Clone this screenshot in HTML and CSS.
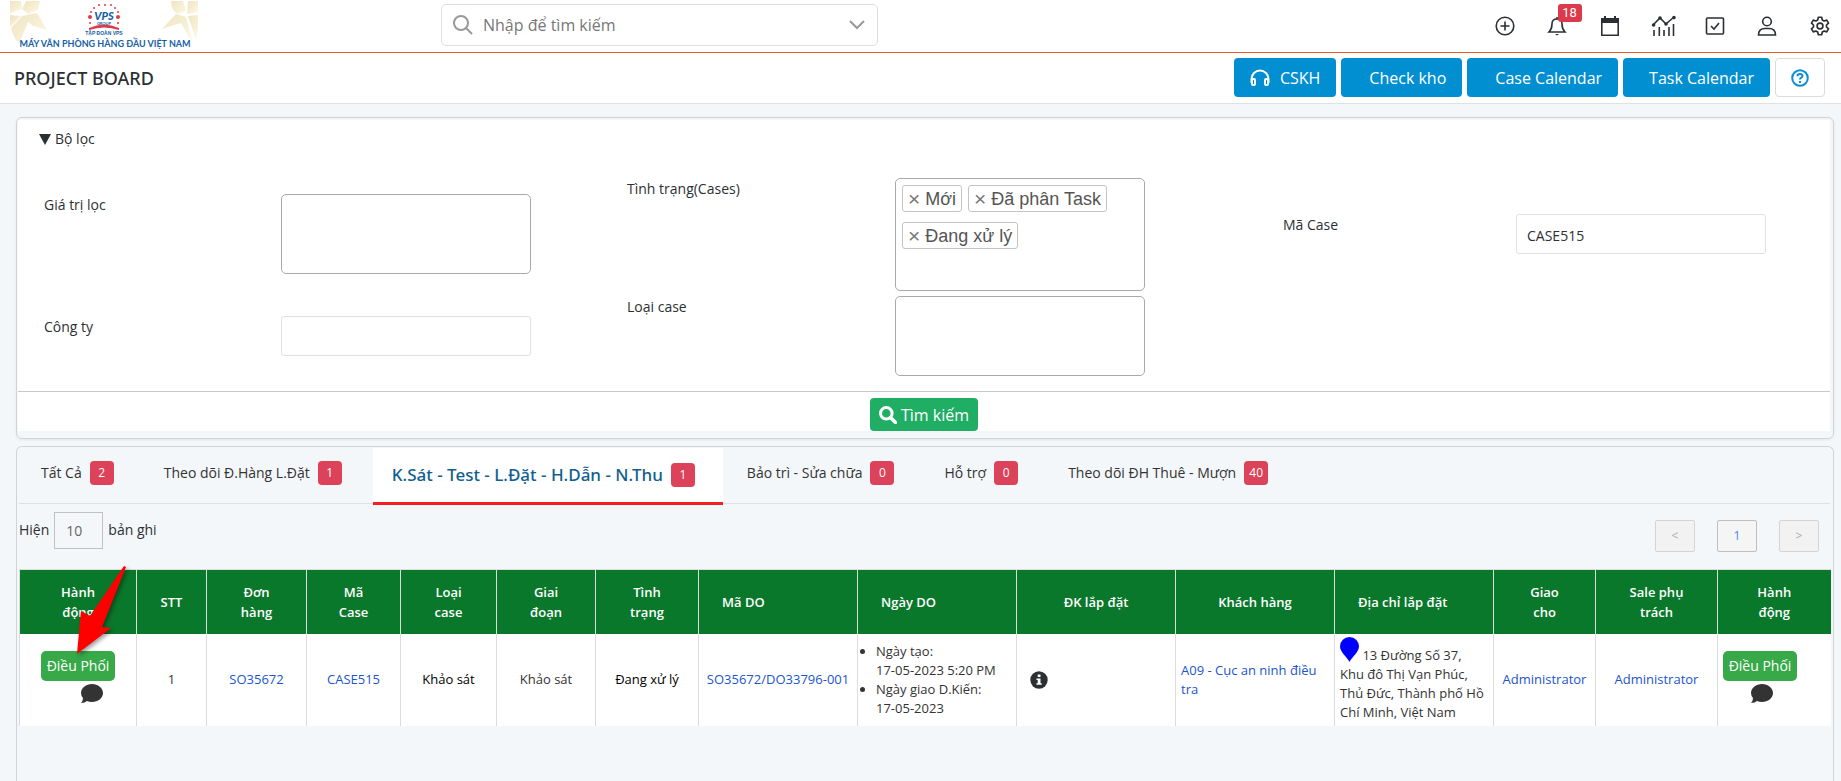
FILE: index.html
```html
<!DOCTYPE html>
<html lang="vi">
<head>
<meta charset="utf-8">
<meta name="viewport" content="width=device-width, initial-scale=1">
<title>Project Board</title>
<link rel="stylesheet" href="styles.css">
</head>
<body>
<header class="topbar">
  <a class="logo" href="#" aria-label="VPS Group">
    <svg width="188" height="50" viewBox="0 0 188 50">
      <defs>
        <linearGradient id="gold" x1="0" y1="0" x2="1" y2="1"><stop offset="0" stop-color="#efe3c2"/><stop offset="1" stop-color="#fdf9e4"/></linearGradient>
      </defs>
      <g fill="url(#gold)">
        <path d="M0 0H11L12 8L0 12Z"/><path d="M16 0H30L28 9L18 13L12 8Z"/><path d="M0 14L11 15L0 26Z"/><path d="M12 15L27 12L37 29L23 25L18 21L9 43Q3 36 1 27Z"/>
        <path d="M161 0H173L176 10L168 13Q161 10 161 0Z"/><path d="M178 0H188V11L177 13Z"/><path d="M178 15L188 14V29L186 38Z"/><path d="M176 16L183 43L171 22L152 28L166 13Z"/>
      </g>
      <g fill="#e2384a">
        <circle cx="80" cy="16" r="2"/><circle cx="81" cy="11" r="1"/><circle cx="84" cy="7" r="1"/><circle cx="89" cy="4" r="1"/><circle cx="95" cy="4" r="1"/><circle cx="101" cy="4" r="1"/><circle cx="105" cy="7" r="1"/><circle cx="108" cy="11" r="1"/><circle cx="108" cy="16" r="2"/><circle cx="80" cy="22" r="1"/><circle cx="108" cy="22" r="1"/>
        <path d="M79 27Q94 20 109 27V29Q94 24 79 29Z"/>
      </g>
      <g fill="#1660a8" text-anchor="middle" class="logo-text">
        <text x="94" y="19" class="logo-name">VPS</text>
        <text x="94" y="24" class="logo-group">GROUP</text>
        <text x="94" y="34" class="logo-corp">TẬP ĐOÀN VPS</text>
        <text x="95" y="46" class="logo-slogan">MÁY VĂN PHÒNG HÀNG ĐẦU VIỆT NAM</text>
      </g>
    </svg>
  </a>
  <label class="search">
    <svg width="20" height="20" viewBox="0 0 20 20" fill="none" stroke="#999" stroke-width="2"><circle cx="8" cy="8" r="7"/><path d="M13 13L19 19"/></svg>
    <input type="text" placeholder="Nhập để tìm kiếm" aria-label="Nhập để tìm kiếm">
    <svg width="16" height="10" viewBox="0 0 16 10" fill="none" stroke="#999" stroke-width="2"><path d="M1 1L8 8L15 1"/></svg>
  </label>
  <nav class="tools">
    <button aria-label="Thêm"><svg viewBox="0 0 20 20" class="line"><circle cx="10" cy="10" r="8.8"/><path d="M10 5.5V14.5M5.5 10H14.5"/></svg></button>
    <button aria-label="Thông báo"><svg viewBox="0 0 20 20" class="line"><path d="M2 16H18Q15 13 15 8Q15 3 10 3Q5 3 5 8Q5 13 2 16Z"/><path d="M10 1V3"/><path d="M8 18H12L10 19.6Z" fill="#2c3034" stroke="none"/></svg><span class="count">18</span></button>
    <button aria-label="Lịch"><svg viewBox="0 0 20 20"><path fill="#2c3034" fill-rule="evenodd" d="M4 0H6V2H14V0H16V2H19V20H1V2H4ZM2.6 7V18.4H17.4V7Z"/></svg></button>
    <button aria-label="Báo cáo"><svg viewBox="0 0 24 20" class="line wide"><path d="M1 9L8 2L14 8L22 1"/><path d="M2 14V20M7.300 11V20M12 14V20M17 11V20M21.500 8V20"/><g fill="#2c3034"><circle cx="1.600" cy="9" r="1"/><circle cx="8" cy="2" r="1"/><circle cx="14" cy="8" r="1"/><circle cx="22" cy="1.600" r="1"/></g></svg></button>
    <button aria-label="Công việc"><svg viewBox="0 0 20 20" class="line"><rect x="1.500" y="2" width="17" height="16" rx="1"/><path d="M6 10L9 13L14 7"/></svg></button>
    <button aria-label="Tài khoản"><svg viewBox="0 0 20 20" class="line"><circle cx="10" cy="5.500" r="4.300"/><path d="M1.500 19Q1.500 12.500 8 12.500H12Q18.500 12.500 18.500 19Z"/></svg></button>
    <button aria-label="Cài đặt"><svg viewBox="0 0 24 24" class="line gear"><circle cx="12" cy="12" r="3.500"/><path d="M10 1.500H14L14.700 4.700L17 6L20.100 5L22.200 8.600L19.800 10.800V13.200L22.200 15.400L20.100 19L17 18L14.700 19.300L14 22.500H10L9.300 19.300L7 18L3.900 19L1.800 15.400L4.200 13.200V10.800L1.800 8.600L3.900 5L7 6L9.300 4.700Z" stroke-linejoin="round"/></svg></button>
  </nav>
</header>

<section class="pagehead">
  <h1>PROJECT BOARD</h1>
  <div class="actions">
    <button class="btn with-icon"><svg width="20" height="18" viewBox="0 0 20 18" fill="none" stroke="#fff" stroke-width="2"><path d="M1.500 14V10A8.500 8.500 0 0 1 18.500 10V14"/><rect x="2" y="10" width="3" height="6" rx="1"/><rect x="15" y="10" width="3" height="6" rx="1"/></svg>CSKH</button>
    <button class="btn roomy">Check kho</button>
    <button class="btn roomy">Case Calendar</button>
    <button class="btn">Task Calendar</button>
    <button class="btn-help" aria-label="Trợ giúp"><svg width="18" height="18" viewBox="0 0 18 18" fill="none" stroke="#0a8fd2" stroke-width="2"><circle cx="9" cy="9" r="7.800"/><path d="M6.500 7.200Q6.500 5 9 5Q11.500 5 11.500 7Q11.500 8.200 10 8.900Q9 9.400 9 10.600"/><path d="M9 12V14"/></svg></button>
  </div>
</section>

<main>
  <section class="panel filter">
    <details class="filter-body" open>
      <summary><svg width="12" height="11" viewBox="0 0 12 11"><path d="M0 0H12L6 11Z" fill="#2c3034"/></svg>Bộ lọc</summary>
      <div class="fields">
        <div class="group group-a">
          <div class="field"><label for="f1">Giá trị lọc</label><input id="f1" class="multi" type="text"></div>
          <div class="field"><label for="f2">Công ty</label><input id="f2" class="single" type="text"></div>
        </div>
        <div class="group group-b">
          <div class="field"><label for="f3">Tình trạng(Cases)</label>
            <div class="multi chips">
              <span class="chip"><button aria-label="Bỏ Mới">×</button>Mới</span>
              <span class="chip"><button aria-label="Bỏ Đã phân Task">×</button>Đã phân Task</span>
              <span class="chip"><button aria-label="Bỏ Đang xử lý">×</button>Đang xử lý</span>
              <input id="f3" type="text">
            </div>
          </div>
          <div class="field"><label for="f4">Loại case</label><input id="f4" class="multi" type="text"></div>
        </div>
        <div class="group group-c">
          <div class="field"><label for="f5">Mã Case</label><input id="f5" class="single" type="text" value="CASE515"></div>
        </div>
      </div>
    </details>
    <div class="submit"><button class="btn-search"><svg width="18" height="18" viewBox="0 0 18 18" fill="none" stroke="#fff"><circle cx="7.300" cy="7.300" r="5.800" stroke-width="3"/><path d="M11.500 11.500L16.500 16.500" stroke-width="3.500" stroke-linecap="round"/></svg>Tìm kiếm</button></div>
  </section>

  <section class="panel results">
    <nav class="tabs">
      <a href="#" class="tab">Tất Cả<span class="badge">2</span></a>
      <a href="#" class="tab">Theo dõi Đ.Hàng L.Đặt<span class="badge">1</span></a>
      <a href="#" class="tab active">K.Sát - Test - L.Đặt - H.Dẫn - N.Thu<span class="badge">1</span></a>
      <a href="#" class="tab">Bảo trì - Sửa chữa<span class="badge">0</span></a>
      <a href="#" class="tab">Hỗ trợ<span class="badge">0</span></a>
      <a href="#" class="tab">Theo dõi ĐH Thuê - Mượn<span class="badge">40</span></a>
    </nav>
    <div class="listbar">
      <label class="length">Hiện <input type="text" value="10"> bản ghi</label>
      <div class="pager">
        <button disabled>&lt;</button>
        <button class="current">1</button>
        <button disabled>&gt;</button>
      </div>
    </div>
    <div class="tablewrap">
      <table>
        <colgroup>
          <col class="w117"><col class="w70"><col class="w100"><col class="w94"><col class="w96"><col class="w99"><col class="w103"><col class="w159"><col class="w159"><col class="w159"><col class="w159"><col class="w159"><col class="w102"><col class="w122"><col class="w113">
        </colgroup>
        <thead>
          <tr>
            <th>Hành<br>động</th><th>STT</th><th>Đơn<br>hàng</th><th>Mã<br>Case</th><th>Loại<br>case</th><th>Giai<br>đoạn</th><th>Tình<br>trạng</th><th class="start">Mã DO</th><th class="start">Ngày DO</th><th>ĐK lắp đặt</th><th>Khách hàng</th><th class="start">Địa chỉ lắp đặt</th><th>Giao<br>cho</th><th>Sale phụ<br>trách</th><th>Hành<br>động</th>
          </tr>
        </thead>
        <tbody>
          <tr>
            <td><div class="ops"><button class="btn-row">Điều Phối</button><svg class="bubble" viewBox="0 0 22 19"><path d="M11 0C17 0 22 4 22 9S17 18 11 18Q8 18 6 17Q4 19 0 19Q2 17 2 14Q0 12 0 9C0 4 5 0 11 0Z" fill="#333"/></svg></div></td>
            <td>1</td>
            <td><a href="#">SO35672</a></td>
            <td><a href="#">CASE515</a></td>
            <td class="dark">Khảo sát</td>
            <td>Khảo sát</td>
            <td class="dark">Đang xử lý</td>
            <td><a href="#">SO35672/DO33796-001</a></td>
            <td class="dates"><ul><li>Ngày tạo:<br>17-05-2023 5:20 PM</li><li>Ngày giao D.Kiến:<br>17-05-2023</li></ul></td>
            <td class="left info"><svg width="18" height="18" viewBox="0 0 18 18"><circle cx="9" cy="9" r="8.700" fill="#2c3034"/><path fill="#fff" d="M7.700 3.500H10.500V6H7.700ZM6.500 7.500H10.500V12.200H11.700V13.800H6.500V12.200H7.700V9.100H6.500Z"/></svg></td>
            <td class="left"><a href="#">A09 - Cục an ninh điều tra</a></td>
            <td class="left"><svg class="pin" width="19" height="25" viewBox="0 0 19 25"><path d="M9.500 0A9.500 9.500 0 0 1 19 9.500C19 15 12 20 9.500 25C7 20 0 15 0 9.500A9.500 9.500 0 0 1 9.500 0Z" fill="#00f"/></svg> 13 Đường Số 37, Khu đô Thị Vạn Phúc, Thủ Đức, Thành phố Hồ Chí Minh, Việt Nam</td>
            <td><a href="#">Administrator</a></td>
            <td><a href="#">Administrator</a></td>
            <td class="left"><div class="ops ops-end"><button class="btn-row">Điều Phối</button><svg class="bubble" viewBox="0 0 22 19"><path d="M11 0C17 0 22 4 22 9S17 18 11 18Q8 18 6 17Q4 19 0 19Q2 17 2 14Q0 12 0 9C0 4 5 0 11 0Z" fill="#333"/></svg></div></td>
          </tr>
        </tbody>
      </table>
      <svg class="pointer" width="60" height="100" viewBox="0 0 60 100"><path d="M52 7L54 8L30 68L39 69L5 95L9 52L18 57Z" fill="#f00"/></svg>
    </div>
  </section>
</main>
</body>
</html>
```
FILE: styles.css
```css
* { box-sizing: border-box; }

body {
  margin: 0;
  min-height: 100vh;
  display: flex;
  flex-direction: column;
  background: #f3f7fa;
  color: #2c3034;
  font: 14px/20px "Open Sans", "Noto Sans", sans-serif;
}

button, input { font: inherit; color: inherit; margin: 0; }
button { cursor: pointer; }
a { color: #1b55cc; text-decoration: none; }

/* Top bar */
.topbar {
  display: flex;
  align-items: center;
  height: 53px;
  background: #fff;
  border-bottom: 1px solid #f0582a;
}
.logo { display: block; width: 441px; height: 50px; padding-left: 10px; }
.logo svg { display: block; }
.logo-name { font: italic 900 11px Lato, sans-serif; }
.logo-group { font: 700 4px Lato, sans-serif; }
.logo-corp { font: 700 5px "Liberation Sans", sans-serif; }
.logo-slogan { font: 700 9px Lato, sans-serif; }
.search {
  display: flex;
  align-items: center;
  gap: 10px;
  width: 437px;
  height: 42px;
  margin-bottom: 2px;
  padding: 0 12px 0 11px;
  border: 1px solid #dcdfe1;
  border-radius: 5px;
}
.search input {
  flex: 1;
  min-width: 0;
  border: 0;
  padding: 0;
  outline: 0;
  background: none;
  font-size: 16px;
}
.search input::placeholder { color: #777; opacity: 1; }
.tools {
  display: flex;
  justify-content: space-between;
  width: 336px;
  margin-left: auto;
  margin-right: 11px;
}
.tools button {
  position: relative;
  display: grid;
  place-items: center;
  width: 21px;
  height: 20px;
  padding: 0;
  border: 0;
  background: none;
}
.tools svg { width: 20px; height: 20px; overflow: visible; }
.tools .wide { width: 24px; }
.line { fill: none; stroke: #2c3034; stroke-width: 1.6px; }
.gear { stroke-width: 2px; }
.count {
  position: absolute;
  left: 11px;
  top: -12px;
  width: 24px;
  border-radius: 3px;
  background: #dc3a4b;
  color: #fff;
  font: 13px/18px Roboto, sans-serif;
  text-align: center;
}

/* Page heading */
.pagehead {
  display: flex;
  align-items: center;
  justify-content: space-between;
  padding: 5px 16px 6px 14px;
  background: #fff;
  border-bottom: 1px solid #dfe2e4;
}
h1 { margin: 0; font: 500 18px/24px "Noto Sans", "Open Sans", sans-serif; }
.actions { display: flex; gap: 5px; }
.btn {
  height: 39px;
  padding: 0 16px 0 26px;
  border: 0;
  border-radius: 4px;
  background: #028fd2;
  color: #fff;
  font-size: 16px;
}
.roomy { padding-left: 28px; }
.with-icon { display: flex; align-items: center; gap: 10px; padding-left: 16px; }
.btn-help {
  display: grid;
  place-items: center;
  width: 50px;
  height: 39px;
  border: 1px solid #d9dcde;
  border-radius: 4px;
  background: #fff;
}

/* Panels */
main { flex: 1; display: flex; flex-direction: column; gap: 7px; padding: 13px 7px 0 16px; }
.panel { border: 1px solid #d0d4d7; border-radius: 6px; }
.filter { padding: 2px 3px 7px 1px; box-shadow: 0 1px 3px #0001; }
.filter-body { min-height: 272px; background: #fff; border-bottom: 1px solid #c6c8ca; }
summary {
  display: flex;
  align-items: center;
  gap: 4px;
  padding: 9px 21px 0;
  list-style: none;
}
.fields {
  display: grid;
  grid-template-columns: 583fr 656fr 483fr;
  padding: 29px 64px 15px 26px;
}
.group { display: flex; flex-direction: column; }
.group-a { padding: 16px 96px 0 0; gap: 42px; }
.group-b { padding-right: 138px; gap: 5px; }
.group-c { padding-top: 36px; }
.field { display: flex; justify-content: space-between; }
.field label { padding-top: 1px; }
.multi, .single { width: 250px; background: #fff; outline: 0; }
.multi { height: 80px; border: 1px solid #aaa; border-radius: 5px; }
.single { height: 40px; padding: 2px 10px 0; border: 1px solid #dfe1e2; border-radius: 3px; }
.chips {
  display: flex;
  flex-wrap: wrap;
  align-content: flex-start;
  gap: 10px 6px;
  height: 113px;
  padding: 6px;
}
.chips input { width: 12px; border: 0; padding: 0; outline: 0; }
.chip {
  display: flex;
  align-items: center;
  gap: 5px;
  height: 27px;
  padding: 0 5px;
  border: 1px solid #c4c4c4;
  border-radius: 3px;
  color: #555;
  font: 18px/24px "Liberation Sans", sans-serif;
}
.chip button { padding: 0; border: 0; background: none; color: #777; font-size: 21px; }
.submit { display: flex; justify-content: center; padding-top: 6px; background: #fff; }
.btn-search {
  display: flex;
  align-items: center;
  gap: 4px;
  height: 33px;
  padding: 0 9px;
  border: 0;
  border-radius: 4px;
  background: #20ad64;
  color: #fff;
  font-size: 16px;
}

/* Results */
.results { flex: 1; padding: 1px 3px 0 2px; border-bottom: 0; border-radius: 6px 6px 0 0; }
.tabs { display: flex; height: 56px; border-bottom: 1px solid #dde1e4; }
.tab {
  display: flex;
  align-items: center;
  gap: 8px;
  height: 50px;
  padding: 0 28px 0 22px;
  color: #333;
}
.tab.active {
  height: 57px;
  margin: 0 2px 0 3px;
  padding: 0 28px 0 19px;
  background: #fff;
  border-bottom: 3px solid #f3201f;
  color: #10608f;
  font: 500 17px/24px "Noto Sans", "Open Sans", sans-serif;
}
.badge {
  width: 24px;
  border-radius: 4px;
  background: #dc4259;
  color: #fff;
  font: 500 12px/24px "Open Sans", sans-serif;
  text-align: center;
}
.listbar { display: flex; justify-content: space-between; align-items: flex-start; padding: 7px 11px 17px 0; }
.length { display: flex; align-items: center; gap: 5px; height: 38px; }
.length input {
  width: 49px;
  height: 37px;
  padding: 0 11px;
  border: 1px solid #bfc2c4;
  background: none;
  color: #666;
}
.pager { display: flex; gap: 22px; padding-top: 9px; }
.pager button {
  width: 40px;
  height: 32px;
  padding: 0;
  border: 1px solid #d4d4d4;
  border-radius: 2px;
  background: #f2f2f2;
  color: #aaa;
  font-size: 12px;
}
.pager .current { border-color: #bfbfbf; background: #f5f5f5; color: #3c8bf5; }

.tablewrap { position: relative; }
table { width: 100%; table-layout: fixed; border-collapse: collapse; font-size: 13px; line-height: 19px; }
.w117 { width: 117px; } .w70 { width: 70px; } .w100 { width: 100px; }
.w94 { width: 94px; } .w96 { width: 96px; } .w99 { width: 99px; }
.w103 { width: 103px; } .w159 { width: 159px; } .w102 { width: 102px; }
.w122 { width: 122px; } .w113 { width: 113px; }
th {
  height: 64px;
  padding: 0 5px;
  border: 1px solid #dadcdd;
  border-bottom: 0;
  background: #0a782b;
  color: #fff;
  font-weight: 600;
  line-height: 20px;
}
th:last-child, td:last-child { border-right: 0; }
th.start { padding-left: 23px; text-align: left; }
td {
  height: 92px;
  padding: 0 5px;
  border: 1px solid #dadcdd;
  border-width: 0 1px;
  background: #fff;
  color: #333;
  text-align: center;
}
td.left { text-align: left; }
td.dark { color: #000; }
td.info { padding-left: 13px; }
.info svg { display: block; }
.dates ul { margin: 0; padding-left: 13px; text-align: left; }
.pin { vertical-align: -2px; }
.ops { display: flex; flex-direction: column; align-items: center; gap: 3px; padding-bottom: 6px; }
.ops-end { align-items: flex-start; }
.btn-row {
  width: 74px;
  height: 30px;
  padding: 0;
  border: 0;
  border-radius: 5px;
  background: #37a948;
  color: #fff;
  font-size: 14px;
}
.bubble { width: 22px; height: 19px; margin-left: 28px; }
.pointer {
  position: absolute;
  left: 53px;
  top: -10px;
  filter: drop-shadow(2px 2px 2px #0006);
  pointer-events: none;
}
```
